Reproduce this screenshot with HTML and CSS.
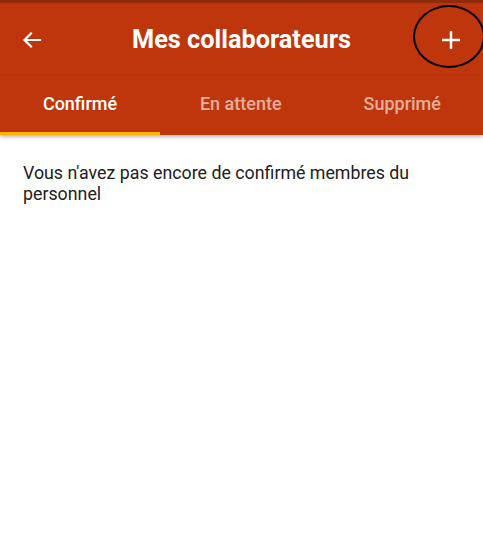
FILE: index.html
```html
<!DOCTYPE html>
<html lang="fr">
<head>
<meta charset="utf-8">
<title>Mes collaborateurs</title>
<link rel="stylesheet" href="styles.css">
</head>
<body>
<div class="screen">
  <div class="status"></div>
  <header class="appbar">
    <button class="icon-btn back" aria-label="Retour">
      <svg width="24" height="24" viewBox="0 0 24 24"><path d="M20 12H5M11 5.5L4.5 12 11 18.5" fill="none" stroke="#fff" stroke-width="2.2" stroke-linecap="square"/></svg>
    </button>
    <h1 class="title">Mes collaborateurs</h1>
    <button class="icon-btn add" aria-label="Ajouter">
      <svg width="22" height="22" viewBox="0 0 22 22"><path d="M11 2v18M2 11h18" fill="none" stroke="#fff" stroke-width="2.4"/></svg>
    </button>
    <span class="circle"></span>
  </header>
  <nav class="tabs">
    <div class="tab active">Confirmé</div>
    <div class="tab">En attente</div>
    <div class="tab">Supprimé</div>
  </nav>
  <main class="content">
    <p class="empty">Vous n'avez pas encore de confirmé membres du personnel</p>
  </main>
</div>
</body>
</html>
```
FILE: styles.css
```css
* { box-sizing: border-box; }
html, body { margin: 0; padding: 0; background: #fff; }
body { font-family: Roboto, "Noto Sans", sans-serif; }
.screen { width: 483px; height: 535px; overflow: hidden; background: #fff; }
.status { height: 3px; background: #8f2a0b; }
.appbar {
  position: relative;
  height: 73px;
  background: #bf360c;
  display: grid;
  grid-template-columns: 1fr auto 1fr;
  align-items: center;
  padding: 0 18px 0 18px;
}
.icon-btn {
  background: none; border: 0; padding: 0; margin: 0;
  display: flex; align-items: center; justify-content: center;
  width: 28px; height: 28px;
}
.back { justify-self: start; }
.add { justify-self: end; }
.title {
  margin: 0;
  text-align: center;
  color: #fff;
  font-size: 25.3px;
  font-weight: 700;
  letter-spacing: 0;
}
.circle {
  position: absolute;
  left: 413px; top: 2px;
  width: 72px; height: 63px;
  border: 2px solid #000;
  border-radius: 50%;
}
.tabs {
  display: grid;
  grid-template-columns: 160px 1fr 1fr;
  height: 59px;
  background: #bf360c;
  box-shadow: 0 2px 4px rgba(0,0,0,0.28);
  position: relative;
}
.tab {
  display: flex;
  align-items: center;
  justify-content: center;
  padding-bottom: 2px;
  color: rgba(255,255,255,0.6);
  font-size: 18px;
  font-weight: 500;
  border-bottom: 3px solid transparent;
}
.tab.active { color: #fff; border-bottom-color: #ffb300; }
.content { padding: 28px 23px; }
.empty {
  margin: 0;
  color: #212121;
  font-size: 17.8px;
  line-height: 20.5px;
}
```
